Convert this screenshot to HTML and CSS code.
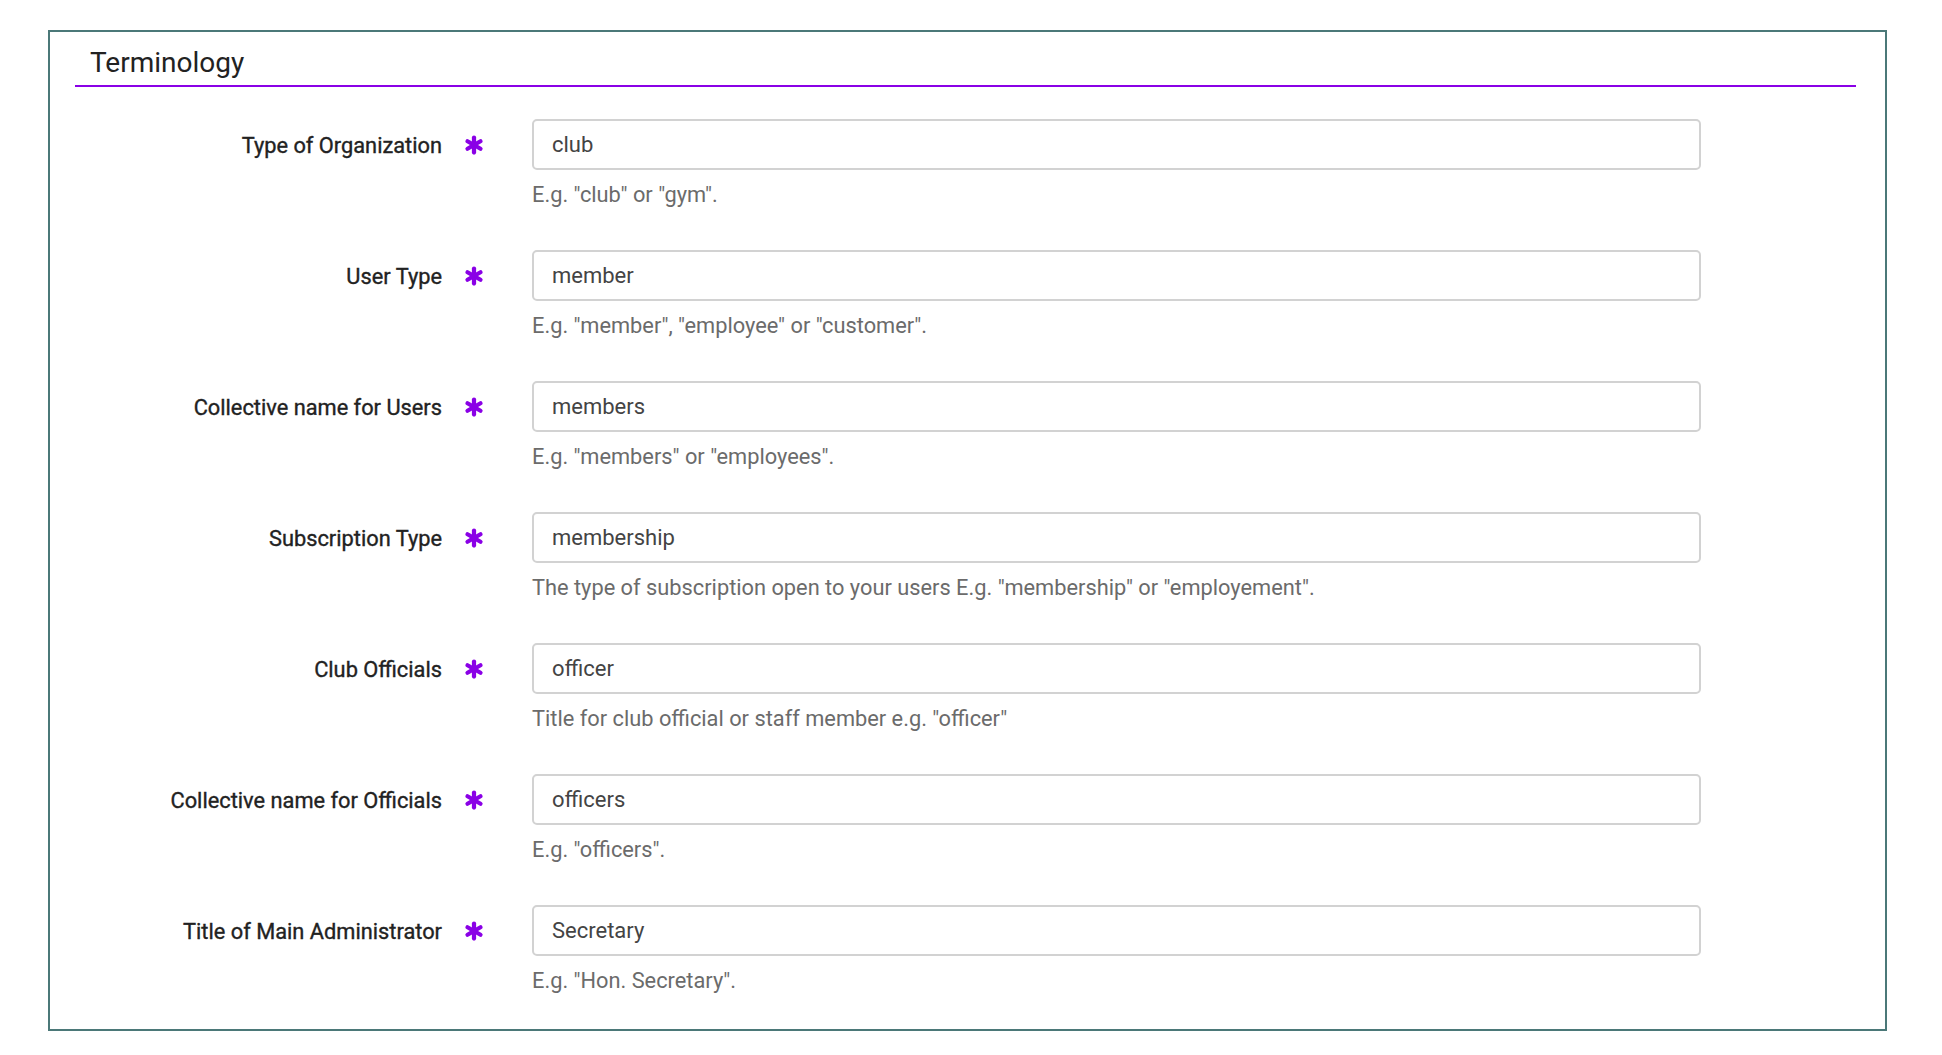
FILE: index.html
```html
<!DOCTYPE html>
<html>
<head>
<title>Terminology</title>
<link rel="stylesheet" href="styles.css">
</head>
<body>

<div class="panel">
  <h2 class="panel-title">Terminology</h2>

  <div class="form-rows">
    <div class="form-row">
      <label class="field-label">Type of Organization</label>
      <span class="required"><svg viewBox="0 0 16 16" width="20" height="20"><g stroke="currentColor" stroke-width="3.4" stroke-linecap="round"><line x1="8" y1="2" x2="8" y2="14"/><line x1="2.8" y1="5" x2="13.2" y2="11"/><line x1="2.8" y1="11" x2="13.2" y2="5"/></g></svg></span>
      <div class="field">
        <input type="text" class="text-input" value="club">
        <p class="help">E.g. "club" or "gym".</p>
      </div>
    </div>

    <div class="form-row">
      <label class="field-label">User Type</label>
      <span class="required"><svg viewBox="0 0 16 16" width="20" height="20"><g stroke="currentColor" stroke-width="3.4" stroke-linecap="round"><line x1="8" y1="2" x2="8" y2="14"/><line x1="2.8" y1="5" x2="13.2" y2="11"/><line x1="2.8" y1="11" x2="13.2" y2="5"/></g></svg></span>
      <div class="field">
        <input type="text" class="text-input" value="member">
        <p class="help">E.g. "member", "employee" or "customer".</p>
      </div>
    </div>

    <div class="form-row">
      <label class="field-label">Collective name for Users</label>
      <span class="required"><svg viewBox="0 0 16 16" width="20" height="20"><g stroke="currentColor" stroke-width="3.4" stroke-linecap="round"><line x1="8" y1="2" x2="8" y2="14"/><line x1="2.8" y1="5" x2="13.2" y2="11"/><line x1="2.8" y1="11" x2="13.2" y2="5"/></g></svg></span>
      <div class="field">
        <input type="text" class="text-input" value="members">
        <p class="help">E.g. "members" or "employees".</p>
      </div>
    </div>

    <div class="form-row">
      <label class="field-label">Subscription Type</label>
      <span class="required"><svg viewBox="0 0 16 16" width="20" height="20"><g stroke="currentColor" stroke-width="3.4" stroke-linecap="round"><line x1="8" y1="2" x2="8" y2="14"/><line x1="2.8" y1="5" x2="13.2" y2="11"/><line x1="2.8" y1="11" x2="13.2" y2="5"/></g></svg></span>
      <div class="field">
        <input type="text" class="text-input" value="membership">
        <p class="help">The type of subscription open to your users E.g. "membership" or "employement".</p>
      </div>
    </div>

    <div class="form-row">
      <label class="field-label">Club Officials</label>
      <span class="required"><svg viewBox="0 0 16 16" width="20" height="20"><g stroke="currentColor" stroke-width="3.4" stroke-linecap="round"><line x1="8" y1="2" x2="8" y2="14"/><line x1="2.8" y1="5" x2="13.2" y2="11"/><line x1="2.8" y1="11" x2="13.2" y2="5"/></g></svg></span>
      <div class="field">
        <input type="text" class="text-input" value="officer">
        <p class="help">Title for club official or staff member e.g. "officer"</p>
      </div>
    </div>

    <div class="form-row">
      <label class="field-label">Collective name for Officials</label>
      <span class="required"><svg viewBox="0 0 16 16" width="20" height="20"><g stroke="currentColor" stroke-width="3.4" stroke-linecap="round"><line x1="8" y1="2" x2="8" y2="14"/><line x1="2.8" y1="5" x2="13.2" y2="11"/><line x1="2.8" y1="11" x2="13.2" y2="5"/></g></svg></span>
      <div class="field">
        <input type="text" class="text-input" value="officers">
        <p class="help">E.g. "officers".</p>
      </div>
    </div>

    <div class="form-row">
      <label class="field-label">Title of Main Administrator</label>
      <span class="required"><svg viewBox="0 0 16 16" width="20" height="20"><g stroke="currentColor" stroke-width="3.4" stroke-linecap="round"><line x1="8" y1="2" x2="8" y2="14"/><line x1="2.8" y1="5" x2="13.2" y2="11"/><line x1="2.8" y1="11" x2="13.2" y2="5"/></g></svg></span>
      <div class="field">
        <input type="text" class="text-input" value="Secretary">
        <p class="help">E.g. "Hon. Secretary".</p>
      </div>
    </div>
  </div>
</div>

</body>
</html>
```

FILE: styles.css
```css
body, html {
  margin: 0;
  background: #fff;
  font-family: Roboto, "Liberation Sans", sans-serif;
}

.panel {
  margin: 30px 55px 0 48px;
  border: 2px solid #4b7878;
  padding: 0 29px 35px 25px;
}

.panel-title {
  margin: 0;
  padding: 12px 0 3px 15px;
  font-size: 28px;
  font-weight: 400;
  line-height: 38px;
  color: #222;
  border-bottom: 2px solid #8a00e6;
}

.form-rows {
  display: flex;
  flex-direction: column;
  gap: 42px;
  padding-top: 32px;
}

.form-row {
  display: grid;
  grid-template-columns: 367px 90px 1169px;
  align-items: start;
}

/* no medium weight installed, so thicken the regular one a little */
.field-label {
  text-align: right;
  font-size: 21.8px;
  font-weight: 400;
  -webkit-text-stroke: 0.35px #222;
  color: #222;
  line-height: 51px;
  padding-top: 1px;
}

.required {
  display: flex;
  align-items: center;
  height: 51px;
  padding-left: 22px;
  color: #8a00e6;
}

.field {
  display: flex;
  flex-direction: column;
}

.text-input {
  height: 51px;
  box-sizing: border-box;
  border: 2px solid #d2d2d2;
  border-radius: 5px;
  padding: 0 18px;
  font-family: inherit;
  font-size: 22px;
  color: #444;
  outline: none;
}

.help {
  margin: 12px 0 0;
  font-size: 21.8px;
  line-height: 26px;
  color: #6b6b6b;
}
```
